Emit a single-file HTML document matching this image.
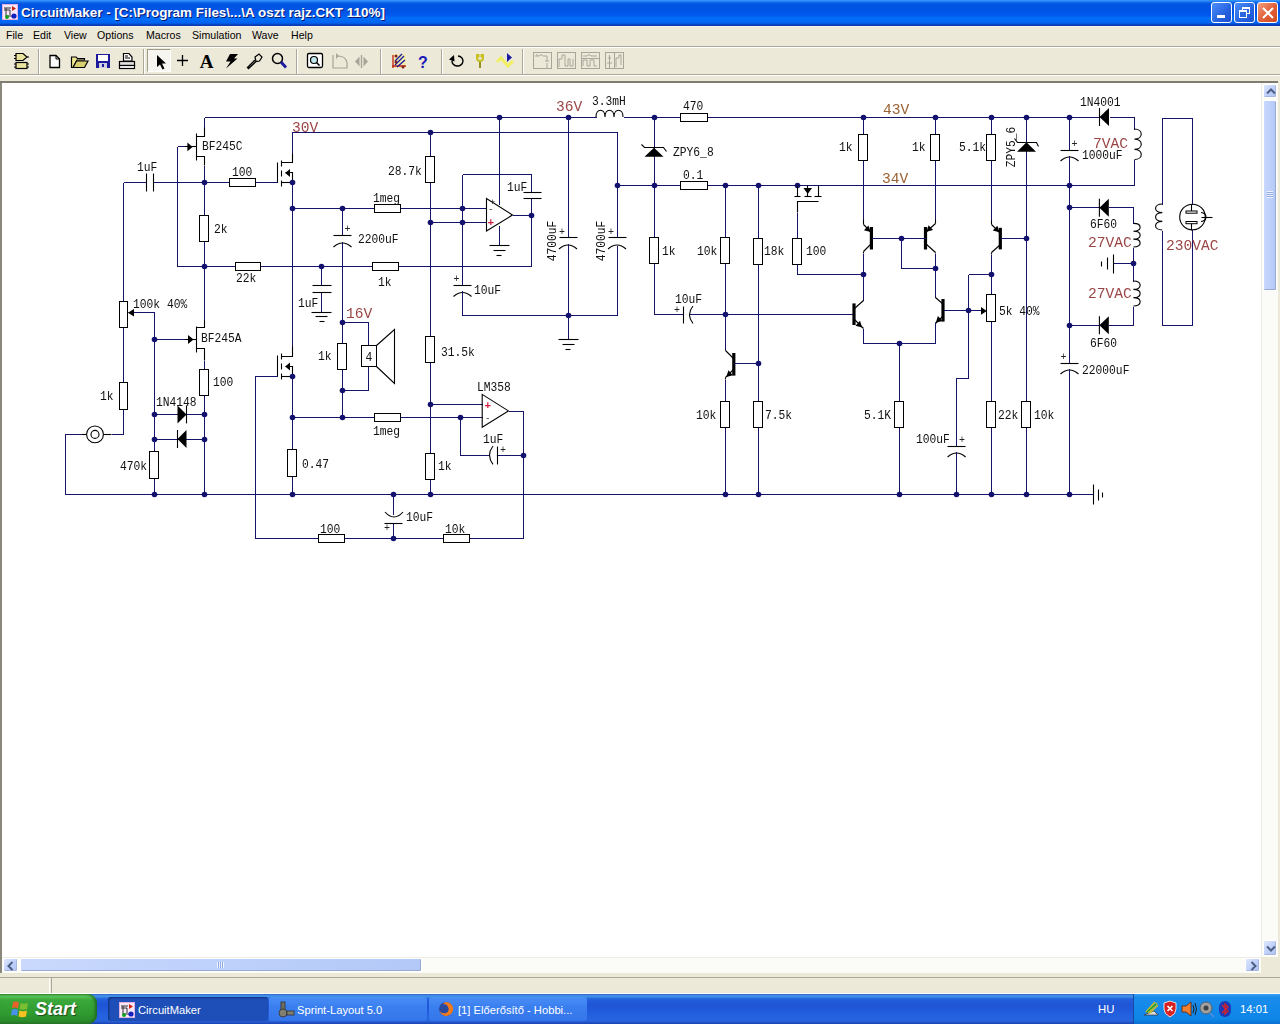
<!DOCTYPE html>
<html><head><meta charset="utf-8">
<style>
*{margin:0;padding:0;box-sizing:border-box}
html,body{width:1280px;height:1024px;overflow:hidden;background:#ece9d8;font-family:"Liberation Sans",sans-serif}
.abs{position:absolute}
#title{left:0;top:0;width:1280px;height:26px;background:linear-gradient(#3d9cff 0px,#2a86f8 1px,#0a5ee6 3px,#0052e2 5px,#0055e6 12px,#005cf0 16px,#006ef8 18px,#0068f6 21px,#0062f0 23px,#0a3cb0 25px,#0a3cb0 26px)}
#title .t{left:21px;top:5px;color:#fff;font-weight:bold;font-size:13.45px;text-shadow:1px 1px #0a1870;white-space:nowrap}
.tbtn{top:2px;width:21px;height:21px;border:1px solid #fff;border-radius:3px;background:linear-gradient(135deg,#4d8ef9,#2663e0 60%,#1c4fd0)}
#menu{left:0;top:26px;width:1280px;height:20px;border-top:1px solid #f2f2f6;background:#ece9d8;font-size:10.6px;color:#000}
#menu span{position:absolute;top:2px}
#tbl1{left:0;top:46px;width:1280px;height:1px;background:#aca899}
#tbl2{left:0;top:47px;width:1280px;height:1px;background:#fff}
#tbl3{left:0;top:74px;width:1280px;height:1px;background:#aca899}
#tbl4{left:0;top:75px;width:1280px;height:1px;background:#fff}
#tbl5{left:0;top:81px;width:1280px;height:2px;background:#7f7d72}
.sep{top:49px;width:2px;height:25px;border-left:1px solid #aca899;border-right:1px solid #fff}
.ico{top:51px;width:20px;height:20px}
#canvas{left:0;top:83px;width:1261px;height:874px;background:#fff;border-left:2px solid #8a887c}
#vscroll{left:1261px;top:83px;width:17px;height:874px;background:#fbfbf8;border-left:1px solid #eeede5}
#vedge{left:1278px;top:76px;width:2px;height:897px;background:#ece9d8}
.sbtn{background:linear-gradient(135deg,#dde7fd,#bccdfa 60%,#b1c4f5);border:1px solid #fff;border-radius:2px;box-shadow:inset -1px -1px 0 #a6b6da}
.thumb{background:linear-gradient(90deg,#c9d8fc,#bed1fb 50%,#b3c8f7);border:1px solid #fff;border-radius:2px;box-shadow:inset -1px -1px 0 #97a9d4, 0 0 0 0 #000}
#hscroll{left:2px;top:957px;width:1259px;height:16px;background:#fbfbf8;border-top:1px solid #eeede5}
#corner{left:1261px;top:957px;width:19px;height:16px;background:#ece9d8}
#status{left:0;top:973px;width:1280px;height:21px;background:#ece9d8}
#taskbar{left:0;top:994px;width:1280px;height:30px;background:linear-gradient(#2c5cb0 0px,#3a80e0 1px,#4598ea 2px,#3a86e6 3px,#2260dc 5px,#2056d6 10px,#2058d8 15px,#2260e0 20px,#2864dc 27px,#1a40b0 30px)}
.task{top:3px;height:24px;border-radius:3px;color:#fff;font-size:11.2px}
.task span{position:absolute;left:30px;top:7px;white-space:nowrap}
svg .w{fill:none;stroke:#14146a;stroke-width:1;shape-rendering:crispEdges}
svg .k{fill:none;stroke:#000;stroke-width:1.1}
svg .d{fill:#12126e}
svg .r{fill:#fff;stroke:#000;stroke-width:1;shape-rendering:crispEdges}
svg text{font-family:"Liberation Mono",monospace}
</style></head><body>
<div id="title" class="abs">
  <svg class="abs" style="left:2px;top:4px" width="16" height="16" viewBox="0 0 16 16">
    <rect x="0.5" y="0.5" width="15" height="15" fill="#f8e8f8" stroke="#e0b0e0"/>
    <path d="M2,4 H9 M2,6 H8 M4,4 V12 M8,6 V11 M4,12 H11" stroke="#333" stroke-width="1" fill="none"/>
    <path d="M10,2 L14,4.5 L10,7 Z" fill="#d02010"/>
    <circle cx="12" cy="12" r="2.6" fill="#1020c0"/>
    <circle cx="5" cy="13" r="2" fill="#10a020"/>
  </svg>
  <div class="abs t">CircuitMaker - [C:\Program Files\...\A oszt rajz.CKT 110%]</div>
  <div class="abs tbtn" style="left:1211px"><div class="abs" style="left:5px;top:12px;width:8px;height:3px;background:#fff"></div></div>
  <div class="abs tbtn" style="left:1234px">
    <div class="abs" style="left:7px;top:4px;width:8px;height:7px;border:1px solid #fff;border-top-width:2px"></div>
    <div class="abs" style="left:4px;top:7px;width:8px;height:8px;border:1px solid #fff;border-top-width:2px;background:#2a66e0"></div>
  </div>
  <div class="abs tbtn" style="left:1257px;background:linear-gradient(135deg,#f0a080,#e2623c 50%,#d04a20)">
    <svg class="abs" style="left:4px;top:4px" width="12" height="12" viewBox="0 0 12 12"><path d="M1,1 L11,11 M11,1 L1,11" stroke="#fff" stroke-width="2"/></svg>
  </div>
</div>
<div id="menu" class="abs">
  <span style="left:6px">File</span><span style="left:33px">Edit</span><span style="left:64px">View</span><span style="left:97px">Options</span><span style="left:146px">Macros</span><span style="left:192px">Simulation</span><span style="left:252px">Wave</span><span style="left:291px">Help</span>
</div>
<div id="tbl1" class="abs"></div><div id="tbl2" class="abs"></div><div id="tbl3" class="abs"></div><div id="tbl4" class="abs"></div><div id="tbl5" class="abs"></div>
<div class="abs sep" style="left:38px"></div>
<div class="abs sep" style="left:143px"></div>
<div class="abs sep" style="left:296px"></div>
<div class="abs sep" style="left:380px"></div>
<div class="abs sep" style="left:441px"></div>
<div class="abs sep" style="left:522px"></div>
<div class="abs" style="left:147px;top:49px;width:24px;height:23px;background:#f6f5f0;border-top:1px solid #9d9b8c;border-left:1px solid #9d9b8c;border-right:1px solid #fff;border-bottom:1px solid #fff"></div>
<svg class="abs" style="left:0;top:44px" width="640" height="32" viewBox="0 44 640 32">
  <!-- component icon -->
  <path d="M16,53.5 H23 L27,57 L23,60.5 H16 Z" fill="#e8e4a0" stroke="#000" stroke-width="1.2"/>
  <path d="M14,55.5 H16 M14,58.5 H16 M27,57 H29" stroke="#000" stroke-width="1.2"/>
  <rect x="16" y="62.5" width="11" height="6" fill="#e8e4a0" stroke="#000" stroke-width="1.2"/>
  <path d="M14,64 H16 M14,67 H16 M27,64 H29 M27,67 H29" stroke="#000" stroke-width="1.2"/>
  <!-- new -->
  <path d="M50,55.5 H56 L59.5,59 V67.5 H50 Z" fill="#fbfbfb" stroke="#000" stroke-width="1.3"/>
  <path d="M56,55.5 V59 H59.5" fill="none" stroke="#000" stroke-width="1"/>
  <!-- open -->
  <path d="M71.5,57 H76 L77.5,58.5 H84.5 V60 H77 L73,67.5 H71.5 Z" fill="#f0e890" stroke="#000" stroke-width="1.2"/>
  <path d="M73,67.5 L76.5,61 H88 L84.5,67.5 Z" fill="#d8d070" stroke="#000" stroke-width="1.2"/>
  <!-- save -->
  <rect x="96" y="54" width="14" height="14" fill="#1a1a9a"/>
  <rect x="98" y="55" width="10" height="6" fill="#fff"/>
  <rect x="99" y="63" width="8" height="5" fill="#d0d0e0"/>
  <rect x="102" y="64" width="2" height="3" fill="#1a1a9a"/>
  <!-- print -->
  <path d="M123.5,53.5 H129 L132,57 V61 H123.5 Z" fill="#fff" stroke="#000" stroke-width="1.2"/>
  <path d="M125,56 H128 M125,58 H130" stroke="#000" stroke-width="1"/>
  <rect x="119.5" y="61.5" width="15" height="4" fill="#e0e0e0" stroke="#000" stroke-width="1.2"/>
  <rect x="119.5" y="65.5" width="15" height="3" fill="#fff" stroke="#000" stroke-width="1.2"/>
  <!-- arrow -->
  <path d="M157,55 L157,67 L160,64.5 L162.5,69.5 L164.5,68.5 L162,63.5 L166,63.5 Z" fill="#000"/>
  <!-- plus -->
  <path d="M177,60.5 H188 M182.5,55 V66" stroke="#000" stroke-width="1.3"/>
  <!-- A -->
  <text x="206.5" y="68" style="font-family:'Liberation Serif'" font-weight="bold" font-size="19" text-anchor="middle" fill="#000">A</text>
  <!-- lightning -->
  <path d="M230,54 H238 L234,58.5 H237.5 L226,68.5 L230.5,61.5 H226 Z" fill="#000"/>
  <!-- probe -->
  <path d="M255,57 L259,54 L262,57 L259.5,61 L256,61.5 Z" fill="none" stroke="#000" stroke-width="1.2"/>
  <path d="M256,61.5 L248.5,68.5 L247.5,67.5 L255,60" fill="none" stroke="#000" stroke-width="1.3"/>
  <!-- magnifier -->
  <circle cx="277.5" cy="58.5" r="5" fill="none" stroke="#000" stroke-width="1.5"/>
  <path d="M281,62 L286,67.5" stroke="#1a1aa0" stroke-width="2.8"/>
  <!-- zoom page -->
  <rect x="307.5" y="53.5" width="15" height="14" rx="1.5" fill="#fff" stroke="#000" stroke-width="1.3"/>
  <circle cx="314" cy="60" r="3.5" fill="#c0e8f0" stroke="#000" stroke-width="1.2"/>
  <path d="M316.5,62.5 L319.5,65.5" stroke="#000" stroke-width="1.6"/>
  <!-- rotate gray -->
  <path d="M333,55 V68 H347 V63 Q346,56 338,56" fill="none" stroke="#a8a69a" stroke-width="1.2"/>
  <path d="M336,53 L339,56 L336,59 Z" fill="#a8a69a"/>
  <!-- mirror gray -->
  <path d="M361.5,55 V68" stroke="#a8a69a" stroke-width="1.4"/>
  <path d="M359.5,56.5 L355,61.5 L359.5,66.5 Z M363.5,56.5 L368,61.5 L363.5,66.5 Z" fill="#a8a69a"/>
  <!-- net icon -->
  <rect x="392" y="54" width="14" height="14" fill="#f4ec98" opacity="0.7"/>
  <path d="M393,55 V68 M392,66 H406" stroke="#c02020" stroke-width="1.3"/>
  <path d="M395,65 L404,56 M395,61 L402,54 M397,67 L405,60" stroke="#1a1aa0" stroke-width="1.3"/>
  <circle cx="396" cy="56" r="1.5" fill="#802020"/><circle cx="396" cy="62" r="1.5" fill="#802020"/><circle cx="403" cy="67" r="1.5" fill="#802020"/>
  <!-- ? -->
  <text x="423" y="68" style="font-family:'Liberation Sans'" font-weight="bold" font-size="16" text-anchor="middle" fill="#1a1ab8">?</text>
  <!-- undo -->
  <path d="M452,60.5 A5.5,5 0 1 0 458,56" fill="none" stroke="#000" stroke-width="1.4"/>
  <path d="M449,59.5 L454,55 L454.5,61.5 Z" fill="#000"/>
  <!-- yellow wrench -->
  <path d="M477,54 V58 Q477,61 480,61 Q483,61 483,58 V54 M478.5,54 V57.5 M481.5,54 V57.5 M480,61 V68" stroke="#c8c020" stroke-width="2" fill="none"/>
  <path d="M480,62 V68" stroke="#606020" stroke-width="1"/>
  <!-- wave -->
  <path d="M497,62 L501,58 L508,66 L513,61" stroke="#f0f060" stroke-width="3" fill="none"/>
  <path d="M507,53 L512,57.5 L507,62 Z" fill="#1a1aa0"/>
  <!-- disabled 4 -->
  <g stroke="#a8a69a" stroke-width="1" fill="none">
    <rect x="533.5" y="52.5" width="18" height="16"/>
    <path d="M535,56 H539 L541,54.5 L543,56 H547 V61 M545,61 H549 M547,63 V68 M537,56 V54"/>
    <rect x="557.5" y="52.5" width="18" height="16"/>
    <path d="M559,67 V59 H562 V55 H565 V66 H568 V59 H570 V66 H573 V59"/>
    <rect x="581.5" y="52.5" width="18" height="16"/>
    <path d="M583,56 H587 L589,54.5 L591,56 H597 M583,66 V60 H587 V66 H590 V60 H594 V66 H597 M581.5,58.5 H599.5"/>
    <rect x="605.5" y="52.5" width="18" height="16"/>
    <path d="M608,58 H611 M609.5,55 V68 M607,63 H612 M614.5,52.5 V68.5 M616,67 V58 H619 V55 H621 V65"/>
  </g>
</svg>
<div id="canvas" class="abs"></div>
<svg class="abs" style="left:0;top:0;will-change:transform" width="1280" height="1024" viewBox="0 0 1280 1024">
<polyline points="204.5,117.5 596.5,117.5" class="w"/>
<path d="M596,117 C596.0,108 605.0,108 605.0,117 C605.0,108 614.0,108 614.0,117 C614.0,108 623.0,108 623.0,117" class="k"/>
<polyline points="623.5,117.5 1099.5,117.5" class="w"/>
<rect x="680.5" y="113.5" width="27.0" height="8" class="r"/>
<polygon points="1099.5,117 1109,108 1109,126" fill="#000"/>
<line x1="1099.5" y1="108" x2="1099.5" y2="126" class="k"/>
<polyline points="1109.5,117.5 1134.5,117.5 1134.5,129.5" class="w"/>
<path d="M1134.5,129 C1143.5,129.0 1143.5,139.16666666666666 1134.5,139.16666666666666 C1143.5,139.16666666666666 1143.5,149.33333333333331 1134.5,149.33333333333331 C1143.5,149.33333333333334 1143.5,159.5 1134.5,159.5" class="k"/>
<polyline points="1134.5,159.5 1134.5,185.5 617.5,185.5" class="w"/>
<circle cx="499.5" cy="117.5" r="2.8" class="d"/>
<circle cx="568.5" cy="117.5" r="2.8" class="d"/>
<circle cx="654.5" cy="117.5" r="2.8" class="d"/>
<circle cx="863.5" cy="117.5" r="2.8" class="d"/>
<circle cx="935.5" cy="117.5" r="2.8" class="d"/>
<circle cx="991.5" cy="117.5" r="2.8" class="d"/>
<circle cx="1026.5" cy="117.5" r="2.8" class="d"/>
<circle cx="1069.5" cy="117.5" r="2.8" class="d"/>
<polyline points="204.5,117.5 204.5,127.5" class="w"/>
<polyline points="204.5,127.5 204.5,136.5 196.5,136.5" class="k"/>
<polyline points="196.5,133.5 196.5,160.5" class="k"/>
<polyline points="196.5,156.5 204.5,156.5 204.5,165.5" class="k"/>
<polyline points="204.5,165.5 204.5,215.5" class="w"/>
<rect x="199.5" y="215.5" width="9" height="26.0" class="r"/>
<polyline points="204.5,241.5 204.5,320.5" class="w"/>
<polyline points="184.5,146.5 196.5,146.5" class="k"/>
<polygon points="192.5,146.9 187.4,142.5 187.4,151.2" fill="#000"/>
<polyline points="177.5,146.5 184.5,146.5" class="w"/>
<polyline points="177.5,146.5 177.5,266.5 235.5,266.5" class="w"/>
<rect x="235.5" y="262.5" width="25.0" height="8" class="r"/>
<polyline points="260.5,266.5 372.5,266.5" class="w"/>
<rect x="372.5" y="262.5" width="26.0" height="8" class="r"/>
<polyline points="398.5,266.5 531.5,266.5 531.5,215.5 512.5,215.5" class="w"/>
<circle cx="204.5" cy="182.5" r="2.8" class="d"/>
<circle cx="204.5" cy="266.5" r="2.8" class="d"/>
<circle cx="321.5" cy="266.5" r="2.8" class="d"/>
<text x="202" y="150.1" font-size="11.3" fill="#111" text-anchor="start" transform="translate(0 -19.51) scale(1 1.13)">BF245C</text>
<text x="214" y="233.1" font-size="11.3" fill="#111" text-anchor="start" transform="translate(0 -30.30) scale(1 1.13)">2k</text>
<text x="236" y="282.1" font-size="11.3" fill="#111" text-anchor="start" transform="translate(0 -36.67) scale(1 1.13)">22k</text>
<text x="378" y="286.1" font-size="11.3" fill="#111" text-anchor="start" transform="translate(0 -37.19) scale(1 1.13)">1k</text>
<polyline points="123.5,182.5 146.5,182.5" class="w"/>
<polyline points="146.5,173.5 146.5,191.5" class="k"/>
<polyline points="153.5,173.5 153.5,191.5" class="k"/>
<polyline points="153.5,182.5 229.5,182.5" class="w"/>
<rect x="229.5" y="178.5" width="26.0" height="8" class="r"/>
<polyline points="255.5,182.5 277.5,182.5" class="w"/>
<polyline points="123.5,182.5 123.5,301.5" class="w"/>
<text x="137" y="171.1" font-size="11.3" fill="#111" text-anchor="start" transform="translate(0 -22.24) scale(1 1.13)">1uF</text>
<text x="232" y="176.1" font-size="11.3" fill="#111" text-anchor="start" transform="translate(0 -22.89) scale(1 1.13)">100</text>
<polyline points="277.5,162.5 277.5,182.5" class="k"/>
<polyline points="281.5,160.5 281.5,166.5" class="k"/>
<polyline points="281.5,170.5 281.5,176.5" class="k"/>
<polyline points="281.5,180.5 281.5,186.5" class="k"/>
<polyline points="281.5,162.5 292.5,162.5 292.5,153.5" class="k"/>
<polyline points="281.5,182.5 292.5,182.5" class="k"/>
<polyline points="285.5,172.5 292.5,172.5 292.5,182.5" class="k"/>
<polygon points="285.2,172.9 290,168.9 290,176.9" fill="#000"/>
<polyline points="292.5,153.5 292.5,132.5 617.5,132.5 617.5,185.5" class="w"/>
<text x="292" y="132.3" font-size="14.6" fill="#9a4545" text-anchor="start" transform="translate(0 -0.00) scale(1 1.0)">30V</text>
<polyline points="292.5,182.5 292.5,346.5" class="w"/>
<circle cx="292.5" cy="182.5" r="2.8" class="d"/>
<circle cx="292.5" cy="208.5" r="2.8" class="d"/>
<polyline points="292.5,208.5 374.5,208.5" class="w"/>
<rect x="374.5" y="204.5" width="26.0" height="8" class="r"/>
<polyline points="400.5,208.5 486.5,208.5" class="w"/>
<circle cx="342.5" cy="208.5" r="2.8" class="d"/>
<circle cx="462.5" cy="208.5" r="2.8" class="d"/>
<text x="373" y="202.1" font-size="11.3" fill="#111" text-anchor="start" transform="translate(0 -26.27) scale(1 1.13)">1meg</text>
<polyline points="342.5,208.5 342.5,235.5" class="w"/>
<polyline points="333.5,235.5 351.5,235.5" class="k"/>
<path d="M333.5,247 Q342.5,239 351.5,247" class="k"/>
<text x="344.5" y="232.3" font-size="10" fill="#222">+</text>
<polyline points="342.5,241.5 342.5,343.5" class="w"/>
<rect x="337.5" y="343.5" width="9" height="26.0" class="r"/>
<polyline points="342.5,369.5 342.5,417.5" class="w"/>
<text x="358" y="243.1" font-size="11.3" fill="#111" text-anchor="start" transform="translate(0 -31.60) scale(1 1.13)">2200uF</text>
<circle cx="430.5" cy="132.5" r="2.8" class="d"/>
<polyline points="430.5,132.5 430.5,156.5" class="w"/>
<rect x="425.5" y="156.5" width="9" height="26.0" class="r"/>
<polyline points="430.5,182.5 430.5,336.5" class="w"/>
<rect x="425.5" y="336.5" width="9" height="26.0" class="r"/>
<polyline points="430.5,362.5 430.5,453.5" class="w"/>
<rect x="425.5" y="453.5" width="9" height="26.0" class="r"/>
<polyline points="430.5,479.5 430.5,494.5" class="w"/>
<circle cx="430.5" cy="222.5" r="2.8" class="d"/>
<circle cx="430.5" cy="404.5" r="2.8" class="d"/>
<circle cx="430.5" cy="494.5" r="2.8" class="d"/>
<text x="388" y="175.1" font-size="11.3" fill="#111" text-anchor="start" transform="translate(0 -22.76) scale(1 1.13)">28.7k</text>
<text x="441" y="356.1" font-size="11.3" fill="#111" text-anchor="start" transform="translate(0 -46.29) scale(1 1.13)">31.5k</text>
<text x="438" y="470.1" font-size="11.3" fill="#111" text-anchor="start" transform="translate(0 -61.11) scale(1 1.13)">1k</text>
<polyline points="430.5,222.5 486.5,222.5" class="w"/>
<circle cx="462.5" cy="222.5" r="2.8" class="d"/>
<polyline points="462.5,174.5 462.5,285.5" class="w"/>
<polyline points="462.5,174.5 531.5,174.5 531.5,192.5" class="w"/>
<polyline points="523.5,192.5 541.5,192.5" class="k"/>
<polyline points="523.5,198.5 541.5,198.5" class="k"/>
<polyline points="531.5,198.5 531.5,215.5" class="w"/>
<circle cx="531.5" cy="215.5" r="2.8" class="d"/>
<text x="507" y="191.1" font-size="11.3" fill="#111" text-anchor="start" transform="translate(0 -24.84) scale(1 1.13)">1uF</text>
<polygon points="486.5,198.5 486.5,231 512.5,215" fill="none" class="k"/>
<text x="488" y="212" font-size="9" fill="#222">-</text>
<text x="487.5" y="226" font-size="11" fill="#d02040" font-weight="bold">+</text>
<text x="490" y="205" font-size="9" fill="#222">+</text>
<polyline points="499.5,117.5 499.5,204.5" class="w"/>
<polyline points="499.5,225.5 499.5,245.5" class="w"/>
<polyline points="489.5,245.5 509.5,245.5" class="k"/>
<polyline points="493.5,250.5 505.5,250.5" class="k"/>
<polyline points="496.5,255.5 501.5,255.5" class="k"/>
<polyline points="453.5,285.5 471.5,285.5" class="k"/>
<path d="M453.5,296.5 Q462.5,288.5 471.5,296.5" class="k"/>
<text x="453.5" y="282.3" font-size="10" fill="#222">+</text>
<polyline points="462.5,290.5 462.5,315.5 617.5,315.5 617.5,245.5" class="w"/>
<text x="474" y="294.1" font-size="11.3" fill="#111" text-anchor="start" transform="translate(0 -38.23) scale(1 1.13)">10uF</text>
<polyline points="568.5,117.5 568.5,237.5" class="w"/>
<polyline points="559.5,237.5 577.5,237.5" class="k"/>
<path d="M559.0,249 Q568,241 577.0,249" class="k"/>
<text x="559" y="234.6" font-size="10" fill="#222">+</text>
<polyline points="568.5,243.5 568.5,339.5" class="w"/>
<polyline points="558.5,339.5 578.5,339.5" class="k"/>
<polyline points="562.5,344.5 574.5,344.5" class="k"/>
<polyline points="565.5,349.5 570.5,349.5" class="k"/>
<circle cx="568.5" cy="315.5" r="2.8" class="d"/>
<polyline points="617.5,185.5 617.5,237.5" class="w"/>
<polyline points="608.5,237.5 626.5,237.5" class="k"/>
<path d="M608.0,249 Q617,241 626.0,249" class="k"/>
<text x="608" y="234.6" font-size="10" fill="#222">+</text>
<text x="552" y="245.1" font-size="11.3" fill="#111" text-anchor="middle" transform="rotate(-90 552 241) translate(0 -31.86) scale(1 1.13)">4700uF</text>
<text x="601" y="245.1" font-size="11.3" fill="#111" text-anchor="middle" transform="rotate(-90 601 241) translate(0 -31.86) scale(1 1.13)">4700uF</text>
<circle cx="617.5" cy="185.5" r="2.8" class="d"/>
<text x="556" y="111.3" font-size="14.6" fill="#9a4545" text-anchor="start" transform="translate(0 -0.00) scale(1 1.0)">36V</text>
<text x="592" y="105.1" font-size="11.3" fill="#111" text-anchor="start" transform="translate(0 -13.66) scale(1 1.13)">3.3mH</text>
<text x="683" y="110.1" font-size="11.3" fill="#111" text-anchor="start" transform="translate(0 -14.31) scale(1 1.13)">470</text>
<polyline points="321.5,266.5 321.5,285.5" class="w"/>
<polyline points="312.5,285.5 331.5,285.5" class="k"/>
<polyline points="312.5,292.5 331.5,292.5" class="k"/>
<polyline points="321.5,292.5 321.5,312.5" class="w"/>
<polyline points="311.5,312.5 331.5,312.5" class="k"/>
<polyline points="315.5,316.5 327.5,316.5" class="k"/>
<polyline points="319.5,321.5 324.5,321.5" class="k"/>
<text x="298" y="307.1" font-size="11.3" fill="#111" text-anchor="start" transform="translate(0 -39.92) scale(1 1.13)">1uF</text>
<circle cx="342.5" cy="322.5" r="2.8" class="d"/>
<polyline points="342.5,322.5 368.5,322.5 368.5,345.5" class="w"/>
<rect x="361.5" y="345.5" width="15" height="20.7" class="r"/>
<polyline points="376.5,345.5 394.5,329.5 394.5,383.5 376.5,366.5" class="k"/>
<text x="365.5" y="361.1" font-size="11.3" fill="#111" text-anchor="start" transform="translate(0 -46.94) scale(1 1.13)">4</text>
<polyline points="368.5,366.5 368.5,390.5 342.5,390.5" class="w"/>
<circle cx="342.5" cy="390.5" r="2.8" class="d"/>
<text x="346" y="318.3" font-size="14.6" fill="#9a4545" text-anchor="start" transform="translate(0 -0.00) scale(1 1.0)">16V</text>
<text x="318" y="360.1" font-size="11.3" fill="#111" text-anchor="start" transform="translate(0 -46.81) scale(1 1.13)">1k</text>
<polyline points="277.5,355.5 277.5,376.5" class="k"/>
<polyline points="281.5,353.5 281.5,359.5" class="k"/>
<polyline points="281.5,363.5 281.5,369.5" class="k"/>
<polyline points="281.5,373.5 281.5,379.5" class="k"/>
<polyline points="281.5,356.5 292.5,356.5 292.5,346.5" class="k"/>
<polyline points="281.5,376.5 292.5,376.5" class="k"/>
<polyline points="285.5,366.5 292.5,366.5 292.5,376.5" class="k"/>
<polygon points="285.2,366.5 290,362.5 290,370.5" fill="#000"/>
<circle cx="292.5" cy="376.5" r="2.8" class="d"/>
<polyline points="292.5,376.5 292.5,449.5" class="w"/>
<rect x="287.5" y="449.5" width="9" height="27.0" class="r"/>
<polyline points="292.5,476.5 292.5,494.5" class="w"/>
<circle cx="292.5" cy="417.5" r="2.8" class="d"/>
<circle cx="292.5" cy="494.5" r="2.8" class="d"/>
<text x="302" y="468.1" font-size="11.3" fill="#111" text-anchor="start" transform="translate(0 -60.85) scale(1 1.13)">0.47</text>
<polyline points="277.5,376.5 255.5,376.5 255.5,538.5 318.5,538.5" class="w"/>
<rect x="318.5" y="534.5" width="26.0" height="8" class="r"/>
<polyline points="344.5,538.5 443.5,538.5" class="w"/>
<rect x="443.5" y="534.5" width="26.0" height="8" class="r"/>
<polyline points="469.5,538.5 523.5,538.5 523.5,411.5 508.5,411.5" class="w"/>
<text x="320" y="533.1" font-size="11.3" fill="#111" text-anchor="start" transform="translate(0 -69.30) scale(1 1.13)">100</text>
<text x="445" y="533.1" font-size="11.3" fill="#111" text-anchor="start" transform="translate(0 -69.30) scale(1 1.13)">10k</text>
<circle cx="393.5" cy="494.5" r="2.8" class="d"/>
<circle cx="393.5" cy="538.5" r="2.8" class="d"/>
<circle cx="523.5" cy="455.5" r="2.8" class="d"/>
<polyline points="393.5,494.5 393.5,514.5" class="w"/>
<path d="M385,512 Q394,522 403,512" class="k"/>
<polyline points="384.5,523.5 402.5,523.5" class="k"/>
<text x="384" y="531" font-size="10" fill="#222">+</text>
<polyline points="393.5,523.5 393.5,538.5" class="w"/>
<text x="406" y="521.1" font-size="11.3" fill="#111" text-anchor="start" transform="translate(0 -67.74) scale(1 1.13)">10uF</text>
<polyline points="292.5,417.5 374.5,417.5" class="w"/>
<rect x="374.5" y="413.5" width="26.0" height="8" class="r"/>
<polyline points="400.5,417.5 482.5,417.5" class="w"/>
<circle cx="342.5" cy="417.5" r="2.8" class="d"/>
<circle cx="460.5" cy="417.5" r="2.8" class="d"/>
<text x="373" y="435.1" font-size="11.3" fill="#111" text-anchor="start" transform="translate(0 -56.56) scale(1 1.13)">1meg</text>
<polyline points="430.5,404.5 482.5,404.5" class="w"/>
<polygon points="482.2,394.4 482.2,427.2 508.4,410.9" fill="none" class="k"/>
<text x="484.5" y="409" font-size="11" fill="#d02040" font-weight="bold">+</text>
<text x="485" y="421" font-size="9" fill="#222">-</text>
<text x="477" y="391.1" font-size="11.3" fill="#111" text-anchor="start" transform="translate(0 -50.84) scale(1 1.13)">LM358</text>
<polyline points="460.5,417.5 460.5,455.5 489.5,455.5" class="w"/>
<path d="M493,446 Q486,455.2 493,464.4" class="k"/>
<polyline points="497.5,446.5 497.5,464.5" class="k"/>
<text x="500" y="453" font-size="10" fill="#222">+</text>
<polyline points="497.5,455.5 523.5,455.5" class="w"/>
<text x="483" y="443.1" font-size="11.3" fill="#111" text-anchor="start" transform="translate(0 -57.60) scale(1 1.13)">1uF</text>
<rect x="119.5" y="301.5" width="8" height="26.0" class="r"/>
<polyline points="128.5,312.5 133.5,312.5" class="k"/>
<polygon points="128,312.75 134,309 134,316.5" fill="#000"/>
<polyline points="133.5,312.5 154.5,312.5 154.5,494.5" class="w"/>
<text x="133" y="308.1" font-size="11.3" fill="#111" text-anchor="start" transform="translate(0 -40.05) scale(1 1.13)">100k 40%</text>
<polyline points="123.5,327.5 123.5,382.5" class="w"/>
<rect x="119.5" y="382.5" width="8" height="27.0" class="r"/>
<polyline points="123.5,409.5 123.5,434.5 111.5,434.5" class="w"/>
<polyline points="111.5,434.5 103.5,434.5" class="k"/>
<circle cx="95" cy="434.4" r="8.4" fill="none" class="k"/>
<circle cx="95" cy="434.4" r="4" fill="none" class="k"/>
<polyline points="86.5,434.5 81.5,434.5" class="k"/>
<polyline points="81.5,434.5 65.5,434.5 65.5,494.5 1093.5,494.5" class="w"/>
<text x="100" y="400.1" font-size="11.3" fill="#111" text-anchor="start" transform="translate(0 -52.01) scale(1 1.13)">1k</text>
<circle cx="154.5" cy="339.5" r="2.8" class="d"/>
<polyline points="154.5,339.5 185.5,339.5" class="w"/>
<polyline points="185.5,339.5 196.5,339.5" class="k"/>
<polygon points="193.5,339.5 188,335 188,344" fill="#000"/>
<polyline points="196.5,326.5 196.5,352.5" class="k"/>
<polyline points="196.5,327.5 204.5,327.5 204.5,320.5" class="k"/>
<polyline points="196.5,348.5 204.5,348.5 204.5,360.5" class="k"/>
<polyline points="204.5,360.5 204.5,369.5" class="w"/>
<rect x="199.5" y="369.5" width="9" height="26.0" class="r"/>
<polyline points="204.5,395.5 204.5,494.5" class="w"/>
<text x="201" y="342.1" font-size="11.3" fill="#111" text-anchor="start" transform="translate(0 -44.47) scale(1 1.13)">BF245A</text>
<text x="213" y="386.1" font-size="11.3" fill="#111" text-anchor="start" transform="translate(0 -50.19) scale(1 1.13)">100</text>
<circle cx="154.5" cy="414.5" r="2.8" class="d"/>
<circle cx="204.5" cy="414.5" r="2.8" class="d"/>
<polyline points="154.5,414.5 204.5,414.5" class="w"/>
<circle cx="154.5" cy="439.5" r="2.8" class="d"/>
<circle cx="204.5" cy="439.5" r="2.8" class="d"/>
<polyline points="154.5,439.5 204.5,439.5" class="w"/>
<polygon points="186.5,414.4 177.5,405.4 177.5,423.4" fill="#000"/>
<line x1="186.5" y1="405.4" x2="186.5" y2="423.4" class="k"/>
<polygon points="177.5,439 186.5,430 186.5,448" fill="#000"/>
<line x1="177.5" y1="430" x2="177.5" y2="448" class="k"/>
<text x="156" y="406.1" font-size="11.3" fill="#111" text-anchor="start" transform="translate(0 -52.79) scale(1 1.13)">1N4148</text>
<rect x="149.5" y="451.5" width="9" height="27.0" class="r"/>
<text x="120" y="470.1" font-size="11.3" fill="#111" text-anchor="start" transform="translate(0 -61.11) scale(1 1.13)">470k</text>
<circle cx="154.5" cy="494.5" r="2.8" class="d"/>
<circle cx="204.5" cy="494.5" r="2.8" class="d"/>
<polyline points="654.5,117.5 654.5,185.5" class="w"/>
<circle cx="654.5" cy="185.5" r="2.8" class="d"/>
<polygon points="654,147.8 644.5,156.8 663.5,156.8" fill="#000"/>
<polyline points="641.5,144.5 644.5,147.5 663.5,147.5 666.5,151.5" class="k"/>
<polyline points="654.5,185.5 654.5,237.5" class="w"/>
<rect x="649.5" y="237.5" width="9" height="26.0" class="r"/>
<polyline points="654.5,263.5 654.5,314.5 683.5,314.5" class="w"/>
<polyline points="683.5,306.5 683.5,323.5" class="k"/>
<path d="M693,306 Q686,314.7 693,323.5" class="k"/>
<text x="674" y="313" font-size="10" fill="#222">+</text>
<polyline points="689.5,314.5 854.5,314.5" class="w"/>
<circle cx="725.5" cy="314.5" r="2.8" class="d"/>
<text x="673" y="156.1" font-size="11.3" fill="#111" text-anchor="start" transform="translate(0 -20.29) scale(1 1.13)">ZPY6_8</text>
<text x="662" y="255.1" font-size="11.3" fill="#111" text-anchor="start" transform="translate(0 -33.16) scale(1 1.13)">1k</text>
<text x="675" y="303.1" font-size="11.3" fill="#111" text-anchor="start" transform="translate(0 -39.40) scale(1 1.13)">10uF</text>
<rect x="680.5" y="181.5" width="27.0" height="8" class="r"/>
<text x="683" y="179.1" font-size="11.3" fill="#111" text-anchor="start" transform="translate(0 -23.28) scale(1 1.13)">0.1</text>
<circle cx="725.5" cy="185.5" r="2.8" class="d"/>
<polyline points="725.5,185.5 725.5,237.5" class="w"/>
<rect x="720.5" y="237.5" width="9" height="26.0" class="r"/>
<polyline points="725.5,263.5 725.5,349.5" class="w"/>
<line x1="733.8" y1="353" x2="733.8" y2="375.6" stroke="#000" stroke-width="3.2"/>
<polyline points="733.5,358.5 725.5,350.5" class="k"/>
<polyline points="725.5,350.5 725.5,349.5" class="k"/>
<polyline points="733.5,369.5 725.5,377.5" class="k"/>
<polyline points="725.5,377.5 725.5,379.5" class="k"/>
<polygon points="726.33,376.89649999999995 728.407123377248,370.37150509765024 732.9528698258849,375.15650135937335" fill="#000"/>
<polyline points="725.5,379.5 725.5,401.5" class="w"/>
<rect x="720.5" y="401.5" width="9" height="26.0" class="r"/>
<polyline points="725.5,427.5 725.5,494.5" class="w"/>
<circle cx="725.5" cy="494.5" r="2.8" class="d"/>
<text x="697" y="255.1" font-size="11.3" fill="#111" text-anchor="start" transform="translate(0 -33.16) scale(1 1.13)">10k</text>
<text x="696" y="419.1" font-size="11.3" fill="#111" text-anchor="start" transform="translate(0 -54.48) scale(1 1.13)">10k</text>
<circle cx="758.5" cy="185.5" r="2.8" class="d"/>
<polyline points="758.5,185.5 758.5,238.5" class="w"/>
<rect x="753.5" y="238.5" width="9" height="26.0" class="r"/>
<polyline points="758.5,264.5 758.5,401.5" class="w"/>
<rect x="753.5" y="401.5" width="9" height="26.0" class="r"/>
<polyline points="758.5,427.5 758.5,494.5" class="w"/>
<circle cx="758.5" cy="494.5" r="2.8" class="d"/>
<polyline points="733.5,363.5 758.5,363.5" class="w"/>
<circle cx="758.5" cy="363.5" r="2.8" class="d"/>
<text x="764" y="255.1" font-size="11.3" fill="#111" text-anchor="start" transform="translate(0 -33.16) scale(1 1.13)">18k</text>
<text x="765" y="419.1" font-size="11.3" fill="#111" text-anchor="start" transform="translate(0 -54.48) scale(1 1.13)">7.5k</text>
<circle cx="797.5" cy="185.5" r="2.8" class="d"/>
<polyline points="797.5,185.5 797.5,196.5" class="k"/>
<polyline points="794.5,196.5 800.5,196.5" class="k"/>
<polyline points="807.5,185.5 807.5,196.5" class="k"/>
<polyline points="804.5,196.5 811.5,196.5" class="k"/>
<polygon points="807.7,194 803.5,188 812,188" fill="#000"/>
<polyline points="818.5,185.5 818.5,196.5" class="k"/>
<polyline points="814.5,196.5 821.5,196.5" class="k"/>
<polyline points="797.5,212.5 797.5,201.5 818.5,201.5" class="k"/>
<polyline points="797.5,212.5 797.5,238.5" class="w"/>
<rect x="792.5" y="238.5" width="9" height="26.0" class="r"/>
<polyline points="797.5,264.5 797.5,274.5 863.5,274.5" class="w"/>
<circle cx="863.5" cy="274.5" r="2.8" class="d"/>
<text x="806" y="255.1" font-size="11.3" fill="#111" text-anchor="start" transform="translate(0 -33.16) scale(1 1.13)">100</text>
<text x="883" y="114.3" font-size="14.6" fill="#9a6232" text-anchor="start" transform="translate(0 -0.00) scale(1 1.0)">43V</text>
<text x="882" y="183.3" font-size="14.6" fill="#9a6232" text-anchor="start" transform="translate(0 -0.00) scale(1 1.0)">34V</text>
<polyline points="863.5,117.5 863.5,134.5" class="w"/>
<rect x="858.5" y="134.5" width="9" height="26.0" class="r"/>
<polyline points="863.5,160.5 863.5,219.5" class="w"/>
<polyline points="935.5,117.5 935.5,134.5" class="w"/>
<rect x="930.5" y="134.5" width="9" height="26.0" class="r"/>
<polyline points="935.5,160.5 935.5,219.5" class="w"/>
<text x="839" y="151.1" font-size="11.3" fill="#111" text-anchor="start" transform="translate(0 -19.64) scale(1 1.13)">1k</text>
<text x="912" y="151.1" font-size="11.3" fill="#111" text-anchor="start" transform="translate(0 -19.64) scale(1 1.13)">1k</text>
<line x1="871.4" y1="227" x2="871.4" y2="249.5" stroke="#000" stroke-width="3.2"/>
<polyline points="871.5,232.5 863.5,224.5" class="k"/>
<polyline points="863.5,224.5 863.5,219.5" class="k"/>
<polyline points="871.5,243.5 863.5,251.5" class="k"/>
<polyline points="863.5,251.5 863.5,253.5" class="k"/>
<polygon points="870.56,231.952 863.937130174115,230.2120013593734 868.482876622752,225.4270050976503" fill="#000"/>
<polyline points="863.5,253.5 863.5,300.5" class="w"/>
<line x1="854" y1="303.4" x2="854" y2="325" stroke="#000" stroke-width="3.2"/>
<polyline points="854.5,308.5 863.5,300.5" class="k"/>
<polyline points="863.5,300.5 863.5,300.5" class="k"/>
<polyline points="854.5,319.5 863.5,328.5" class="k"/>
<polyline points="863.5,328.5 863.5,328.5" class="k"/>
<polygon points="862.1,327.395 855.4771301741151,325.6550013593734 860.022876622752,320.8700050976503" fill="#000"/>
<line x1="925.5" y1="227" x2="925.5" y2="249.5" stroke="#000" stroke-width="3.2"/>
<polyline points="925.5,232.5 935.5,223.5" class="k"/>
<polyline points="935.5,223.5 935.5,219.5" class="k"/>
<polyline points="925.5,243.5 935.5,252.5" class="k"/>
<polyline points="935.5,252.5 935.5,253.5" class="k"/>
<polygon points="926.45,231.8475 928.527123377248,225.3225050976503 933.0728698258849,230.1075013593734" fill="#000"/>
<polyline points="935.5,253.5 935.5,297.5" class="w"/>
<line x1="943" y1="299" x2="943" y2="321.6" stroke="#000" stroke-width="3.2"/>
<polyline points="943.5,304.5 935.5,297.5" class="k"/>
<polyline points="935.5,297.5 935.5,297.5" class="k"/>
<polyline points="943.5,315.5 935.5,323.5" class="k"/>
<polyline points="935.5,323.5 935.5,322.5" class="k"/>
<polygon points="935.8,322.64000000000004 937.8771233772479,316.11500509765034 942.4228698258848,320.90000135937345" fill="#000"/>
<polyline points="863.5,328.5 863.5,343.5 935.5,343.5 935.5,322.5" class="w"/>
<circle cx="899.5" cy="343.5" r="2.8" class="d"/>
<polyline points="899.5,343.5 899.5,401.5" class="w"/>
<rect x="894.5" y="401.5" width="9" height="26.0" class="r"/>
<polyline points="899.5,427.5 899.5,494.5" class="w"/>
<circle cx="899.5" cy="494.5" r="2.8" class="d"/>
<text x="864" y="419.1" font-size="11.3" fill="#111" text-anchor="start" transform="translate(0 -54.48) scale(1 1.13)">5.1K</text>
<polyline points="871.5,238.5 925.5,238.5" class="w"/>
<circle cx="901.5" cy="238.5" r="2.8" class="d"/>
<polyline points="901.5,238.5 901.5,268.5 935.5,268.5" class="w"/>
<circle cx="935.5" cy="268.5" r="2.8" class="d"/>
<polyline points="943.5,310.5 982.5,310.5" class="w"/>
<circle cx="968.5" cy="310.5" r="2.8" class="d"/>
<polygon points="986.8,310.9 981,307 981,314.8" fill="#000"/>
<polyline points="968.5,274.5 968.5,378.5 956.5,378.5 956.5,446.5" class="w"/>
<polyline points="947.5,446.5 965.5,446.5" class="k"/>
<path d="M947.6,457 Q956.6,449 965.6,457" class="k"/>
<text x="959" y="443" font-size="10" fill="#222">+</text>
<polyline points="956.5,451.5 956.5,494.5" class="w"/>
<circle cx="956.5" cy="494.5" r="2.8" class="d"/>
<text x="916" y="443.1" font-size="11.3" fill="#111" text-anchor="start" transform="translate(0 -57.60) scale(1 1.13)">100uF</text>
<polyline points="968.5,274.5 991.5,274.5" class="w"/>
<circle cx="991.5" cy="274.5" r="2.8" class="d"/>
<polyline points="991.5,117.5 991.5,134.5" class="w"/>
<rect x="986.5" y="134.5" width="9" height="26.0" class="r"/>
<polyline points="991.5,160.5 991.5,220.5" class="w"/>
<line x1="1000.3" y1="227.8" x2="1000.3" y2="249.4" stroke="#000" stroke-width="3.2"/>
<polyline points="1000.5,233.5 991.5,224.5" class="k"/>
<polyline points="991.5,224.5 991.5,220.5" class="k"/>
<polyline points="1000.5,244.5 991.5,252.5" class="k"/>
<polyline points="991.5,252.5 991.5,254.5" class="k"/>
<polygon points="999.42,232.26400000000004 992.7971301741151,230.52400135937344 997.342876622752,225.73900509765033" fill="#000"/>
<polyline points="991.5,254.5 991.5,294.5" class="w"/>
<rect x="986.5" y="294.5" width="9" height="27.0" class="r"/>
<polyline points="991.5,321.5 991.5,401.5" class="w"/>
<rect x="986.5" y="401.5" width="9" height="26.0" class="r"/>
<polyline points="991.5,427.5 991.5,494.5" class="w"/>
<circle cx="991.5" cy="494.5" r="2.8" class="d"/>
<text x="959" y="151.1" font-size="11.3" fill="#111" text-anchor="start" transform="translate(0 -19.64) scale(1 1.13)">5.1k</text>
<text x="999" y="315.1" font-size="11.3" fill="#111" text-anchor="start" transform="translate(0 -40.96) scale(1 1.13)">5k 40%</text>
<text x="998" y="419.1" font-size="11.3" fill="#111" text-anchor="start" transform="translate(0 -54.48) scale(1 1.13)">22k</text>
<polyline points="1000.5,238.5 1026.5,238.5" class="w"/>
<circle cx="1026.5" cy="238.5" r="2.8" class="d"/>
<polyline points="1026.5,117.5 1026.5,401.5" class="w"/>
<polygon points="1026.5,142.2 1017,151.8 1036,151.8" fill="#000"/>
<polyline points="1014.5,138.5 1017.5,142.5 1036.5,142.5 1038.5,146.5" class="k"/>
<rect x="1021.5" y="401.5" width="9" height="26.0" class="r"/>
<polyline points="1026.5,427.5 1026.5,494.5" class="w"/>
<circle cx="1026.5" cy="494.5" r="2.8" class="d"/>
<text x="1011" y="151.1" font-size="11.3" fill="#111" text-anchor="middle" transform="rotate(-90 1011 147) translate(0 -19.64) scale(1 1.13)">ZPY5_6</text>
<text x="1034" y="419.1" font-size="11.3" fill="#111" text-anchor="start" transform="translate(0 -54.48) scale(1 1.13)">10k</text>
<polyline points="1069.5,117.5 1069.5,150.5" class="w"/>
<polyline points="1060.5,150.5 1078.5,150.5" class="k"/>
<path d="M1060.5,161 Q1069.5,153 1078.5,161" class="k"/>
<text x="1071.5" y="147.4" font-size="10" fill="#222">+</text>
<polyline points="1069.5,155.5 1069.5,363.5" class="w"/>
<polyline points="1060.5,363.5 1078.5,363.5" class="k"/>
<path d="M1060.5,374 Q1069.5,366 1078.5,374" class="k"/>
<text x="1060.5" y="360.4" font-size="10" fill="#222">+</text>
<polyline points="1069.5,368.5 1069.5,494.5" class="w"/>
<circle cx="1069.5" cy="494.5" r="2.8" class="d"/>
<circle cx="1069.5" cy="185.5" r="2.8" class="d"/>
<circle cx="1069.5" cy="207.5" r="2.8" class="d"/>
<circle cx="1069.5" cy="325.5" r="2.8" class="d"/>
<text x="1082" y="159.1" font-size="11.3" fill="#111" text-anchor="start" transform="translate(0 -20.68) scale(1 1.13)">1000uF</text>
<text x="1082" y="374.1" font-size="11.3" fill="#111" text-anchor="start" transform="translate(0 -48.63) scale(1 1.13)">22000uF</text>
<text x="1080" y="106.1" font-size="11.3" fill="#111" text-anchor="start" transform="translate(0 -13.79) scale(1 1.13)">1N4001</text>
<text x="1093" y="148.3" font-size="14.6" fill="#9a4545" text-anchor="start" transform="translate(0 -0.00) scale(1 1.0)">7VAC</text>
<polyline points="1093.5,484.5 1093.5,504.5" class="k"/>
<polyline points="1098.5,489.5 1098.5,500.5" class="k"/>
<polyline points="1102.5,492.5 1102.5,497.5" class="k"/>
<polyline points="1069.5,207.5 1099.5,207.5" class="w"/>
<polygon points="1099.4,207.7 1108.8,198.7 1108.8,216.7" fill="#000"/>
<line x1="1099.4" y1="198.7" x2="1099.4" y2="216.7" class="k"/>
<polyline points="1108.5,207.5 1133.5,207.5 1133.5,223.5" class="w"/>
<path d="M1133.4,223.4 C1142.4,223.4 1142.4,231.26666666666668 1133.4,231.26666666666668 C1142.4,231.26666666666668 1142.4,239.13333333333335 1133.4,239.13333333333335 C1142.4,239.13333333333333 1142.4,247.0 1133.4,247.0" class="k"/>
<polyline points="1133.5,247.5 1133.5,281.5" class="w"/>
<path d="M1133.4,281 C1142.4,281.0 1142.4,289.3333333333333 1133.4,289.3333333333333 C1142.4,289.3333333333333 1142.4,297.66666666666663 1133.4,297.66666666666663 C1142.4,297.6666666666667 1142.4,306.0 1133.4,306.0" class="k"/>
<polyline points="1133.5,306.5 1133.5,325.5 1108.5,325.5" class="w"/>
<polygon points="1099.4,325.3 1108.8,316.3 1108.8,334.3" fill="#000"/>
<line x1="1099.4" y1="316.3" x2="1099.4" y2="334.3" class="k"/>
<polyline points="1099.5,325.5 1069.5,325.5" class="w"/>
<circle cx="1133.5" cy="263.5" r="2.8" class="d"/>
<polyline points="1113.5,263.5 1133.5,263.5" class="w"/>
<polyline points="1113.5,254.5 1113.5,273.5" class="k"/>
<polyline points="1107.5,257.5 1107.5,269.5" class="k"/>
<polyline points="1101.5,261.5 1101.5,266.5" class="k"/>
<text x="1090" y="228.1" font-size="11.3" fill="#111" text-anchor="start" transform="translate(0 -29.65) scale(1 1.13)">6F60</text>
<text x="1090" y="347.1" font-size="11.3" fill="#111" text-anchor="start" transform="translate(0 -45.12) scale(1 1.13)">6F60</text>
<text x="1088" y="247.3" font-size="14.6" fill="#9a4545" text-anchor="start" transform="translate(0 -0.00) scale(1 1.0)">27VAC</text>
<text x="1088" y="298.3" font-size="14.6" fill="#9a4545" text-anchor="start" transform="translate(0 -0.00) scale(1 1.0)">27VAC</text>
<polyline points="1162.5,204.5 1162.5,118.5 1192.5,118.5 1192.5,204.5" class="w"/>
<path d="M1162.3,204 C1153.3,204.0 1153.3,212.66666666666666 1162.3,212.66666666666666 C1153.3,212.66666666666666 1153.3,221.33333333333331 1162.3,221.33333333333331 C1153.3,221.33333333333334 1153.3,230.0 1162.3,230.0" class="k"/>
<polyline points="1162.5,230.5 1162.5,325.5 1192.5,325.5 1192.5,229.5" class="w"/>
<circle cx="1192.5" cy="217" r="12.8" fill="#fff" class="k"/>
<polyline points="1191.5,204.5 1191.5,211.5" class="k"/>
<polyline points="1191.5,223.5 1191.5,230.5" class="k"/>
<rect x="1186" y="211" width="11" height="2.2" fill="#fff" stroke="#000" stroke-width="1"/>
<rect x="1186" y="221.5" width="11" height="2.2" fill="#fff" stroke="#000" stroke-width="1"/>
<path d="M1201,212.5 Q1206,213 1206,217 Q1206,221 1201,221.5" class="k"/>
<polyline points="1201.5,217.5 1212.5,217.5" class="k"/>
<text x="1166" y="250.3" font-size="14.6" fill="#9a4545" text-anchor="start" transform="translate(0 -0.00) scale(1 1.0)">230VAC</text>
</svg>
<div id="vscroll" class="abs"></div>
<div id="vedge" class="abs"></div>
<div class="abs sbtn" style="left:1263px;top:84px;width:14px;height:14px">
  <svg class="abs" style="left:2px;top:3px" width="10" height="7" viewBox="0 0 10 7"><path d="M1,5.5 L5,1.5 L9,5.5" stroke="#4d6185" stroke-width="2" fill="none"/></svg>
</div>
<div class="abs thumb" style="left:1263px;top:100px;width:14px;height:191px">
  <div class="abs" style="left:3px;top:90px;width:6px;height:7px;background:repeating-linear-gradient(#eef3fe 0 1px,#8faae0 1px 2px)"></div>
</div>
<div class="abs sbtn" style="left:1263px;top:940px;width:14px;height:16px">
  <svg class="abs" style="left:2px;top:4px" width="10" height="7" viewBox="0 0 10 7"><path d="M1,1.5 L5,5.5 L9,1.5" stroke="#4d6185" stroke-width="2" fill="none"/></svg>
</div>
<div id="hscroll" class="abs"></div>
<div id="corner" class="abs"></div>
<div class="abs" style="left:0;top:957px;width:2px;height:16px;background:#8a887c"></div>
<div class="abs sbtn" style="left:3px;top:958px;width:15px;height:14px">
  <svg class="abs" style="left:3px;top:2px" width="7" height="10" viewBox="0 0 7 10"><path d="M5.5,1 L1.5,5 L5.5,9" stroke="#4d6185" stroke-width="2" fill="none"/></svg>
</div>
<div class="abs thumb" style="left:20px;top:958px;width:402px;height:14px">
  <div class="abs" style="left:196px;top:3px;width:7px;height:6px;background:repeating-linear-gradient(90deg,#eef3fe 0 1px,#8faae0 1px 2px)"></div>
</div>
<div class="abs sbtn" style="left:1245px;top:958px;width:15px;height:14px">
  <svg class="abs" style="left:4px;top:2px" width="7" height="10" viewBox="0 0 7 10"><path d="M1.5,1 L5.5,5 L1.5,9" stroke="#4d6185" stroke-width="2" fill="none"/></svg>
</div>
<div id="status" class="abs">
  <div class="abs" style="left:0;top:4px;width:1280px;height:1px;background:#aca899"></div>
  <div class="abs" style="left:49px;top:5px;width:3px;height:15px;border-left:1px solid #fff;border-right:1px solid #aca899"></div>
  <div class="abs" style="left:0;top:20px;width:1280px;height:1px;background:#fff"></div>
</div>
<div id="taskbar" class="abs">
  <div class="abs" style="left:0;top:0;width:97px;height:30px;border-radius:0 9px 9px 0;background:linear-gradient(#3c9a3c 0px,#5cc55c 2px,#3aa83a 6px,#2f9a2f 20px,#2a8a2a 27px,#2a7a2a 30px);box-shadow:inset -2px 0 3px #1f6a1f"></div>
  <svg class="abs" style="left:11px;top:6px" width="18" height="18" viewBox="0 0 18 18">
    <path d="M2,2 Q5,1 8,2.5 L7,8.5 Q4,7 1,8 Z" fill="#e8602a"/>
    <path d="M9.5,3 Q13,4.5 17,3 L16,9 Q12.5,10.5 8.5,9 Z" fill="#7ac030"/>
    <path d="M1,9.5 Q4,8.5 7,10 L6,16 Q3,14.5 0,15.5 Z" fill="#4a90e8"/>
    <path d="M8.5,10.5 Q12,12 16,10.5 L15,16.5 Q11.5,18 7.5,16.5 Z" fill="#f8c020"/>
  </svg>
  <div class="abs" style="left:35px;top:5px;color:#fff;font-size:18px;font-weight:bold;font-style:italic;text-shadow:1px 1px 1px #1a4a1a">Start</div>
  <div class="abs task" style="left:108px;width:160px;background:#1e4fb8;box-shadow:inset 1px 1px 2px #10307a">
    <svg class="abs" style="left:11px;top:5px" width="16" height="16" viewBox="0 0 16 16">
      <rect x="0.5" y="0.5" width="15" height="15" fill="#f8e8f8" stroke="#e0b0e0"/>
      <path d="M2,4 H9 M2,6 H8 M4,4 V12 M8,6 V11 M4,12 H11" stroke="#333" stroke-width="1" fill="none"/>
      <path d="M10,2 L14,4.5 L10,7 Z" fill="#d02010"/><circle cx="12" cy="12" r="2.6" fill="#1020c0"/><circle cx="5" cy="13" r="2" fill="#10a020"/>
    </svg>
    <span>CircuitMaker</span>
  </div>
  <div class="abs task" style="left:269px;width:158px;background:linear-gradient(#4a8ff5,#3a7ff0 40%,#3575ea)">
    <svg class="abs" style="left:9px;top:4px" width="18" height="18" viewBox="0 0 18 18">
      <rect x="3" y="1" width="4" height="9" fill="#707060" stroke="#303030" stroke-width="0.8"/>
      <circle cx="5" cy="12" r="4" fill="#808070" stroke="#303030" stroke-width="0.8"/>
      <rect x="9" y="10" width="7" height="4" fill="#808070" stroke="#303030" stroke-width="0.8"/>
    </svg>
    <span style="left:28px">Sprint-Layout 5.0</span>
  </div>
  <div class="abs task" style="left:429px;width:158px;background:linear-gradient(#4a8ff5,#3a7ff0 40%,#3575ea)">
    <svg class="abs" style="left:9px;top:4px" width="16" height="16" viewBox="0 0 16 16">
      <circle cx="8" cy="8" r="7" fill="#2a4aa0"/>
      <path d="M8,1 A7,7 0 1 1 1.5,10 Q4,13 8,12 Q12,10 10,6 Q9,3 5,3 Q7,1 8,1 Z" fill="#f07a20"/>
    </svg>
    <span style="left:29px">[1] Előerősítő - Hobbi...</span>
  </div>
  <div class="abs" style="left:1098px;top:9px;color:#fff;font-size:11.3px">HU</div>
  <div class="abs" style="left:1133px;top:0;width:147px;height:30px;background:linear-gradient(#3ba0f0 0px,#1a8ceb 3px,#0d86e8 25px,#0a70d0 30px);border-left:1px solid #1a4aa0"></div>
  <svg class="abs" style="left:1140px;top:5px" width="100" height="20" viewBox="0 0 100 20">
    <path d="M4,16 L18,16 L14,12 Z" fill="#e0e0e0" stroke="#404040" stroke-width="0.8"/>
    <path d="M8,14 L17,4 M10,14 L18,6 M6,13 L15,3" stroke="#d0c020" stroke-width="1.4"/>
    <path d="M7,13 L16,5" stroke="#20a020" stroke-width="1.4"/>
    <path d="M30,2 L36,4 V10 Q36,15 30,18 Q24,15 24,10 V4 Z" fill="#d82020" stroke="#fff" stroke-width="0.8"/>
    <path d="M27.5,7 L32.5,12 M32.5,7 L27.5,12" stroke="#fff" stroke-width="1.6"/>
    <path d="M42,7 H46 L51,3 V17 L46,13 H42 Z" fill="#f08030" stroke="#602000" stroke-width="0.8"/>
    <path d="M53,6 Q55,10 53,14 M55,4 Q58,10 55,16" stroke="#202020" stroke-width="1" fill="none"/>
    <circle cx="66" cy="9" r="6" fill="#a0a0a0" stroke="#505050" stroke-width="0.8"/>
    <circle cx="66" cy="9" r="2.5" fill="#404040"/>
    <path d="M70,14 L74,18" stroke="#6090d0" stroke-width="1.2"/>
    <rect x="79" y="2" width="12" height="16" rx="6" fill="#1a3ab8"/>
    <path d="M82,6 L88,12 L85,15 V5 L88,8 L82,14" stroke="#e02020" stroke-width="1.3" fill="none"/>
  </svg>
  <div class="abs" style="left:1240px;top:9px;color:#fff;font-size:11.3px">14:01</div>
</div>
</body></html>
